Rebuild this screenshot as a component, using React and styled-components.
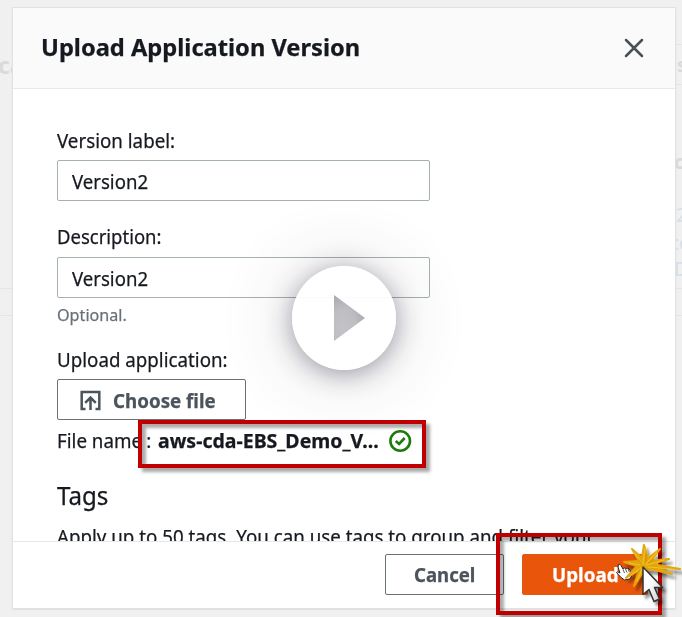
import React from 'react';
import styled, { createGlobalStyle } from 'styled-components';

const GlobalStyle = createGlobalStyle`
  * { box-sizing: border-box; }
  body {
    margin: 0;
    background: #f0f0f0;
    color: #16191f;
    font-family: "Noto Sans", "Open Sans", sans-serif;
    overflow: hidden;
  }
`;

const Screen = styled.main`
  position: relative;
  width: 682px;
  height: 617px;
  padding: 8px 7px 9px 13px;
  overflow: hidden;
  background: #f0f0f0;
`;

/* Dimmed page behind the dialog */
const Backdrop = styled.div`
  position: absolute;
  inset: 0;
`;

const BackdropRule = styled.div`
  position: absolute;
  left: ${(p) => p.$left || 0}px;
  right: 0;
  top: ${(p) => p.$top}px;
  height: 1px;
  background: #e4e5e5;
`;

const BackdropText = styled.span`
  position: absolute;
  left: ${(p) => p.$left}px;
  top: ${(p) => p.$top}px;
  font-size: ${(p) => p.$size || 19}px;
  font-weight: ${(p) => (p.$bold ? 700 : 400)};
  line-height: 24px;
  color: ${(p) => p.$color || '#d9dada'};
`;

const Dialog = styled.section`
  position: relative;
  display: flex;
  flex-direction: column;
  height: 600px;
  background: #fff;
  box-shadow: 0 0 0 1px #e0e3e3, 0 1px 1px #bcc2c3, -1px 1px 1px #d0d3d3, 1px 1px 1px #d0d3d3;
`;

const Header = styled.header`
  display: flex;
  align-items: center;
  justify-content: space-between;
  height: 81px;
  padding: 0 31px 2px 28px;
  background: #fafafa;
  border-bottom: 1px solid #e6eaea;
`;

const Condensed = styled.span`
  display: inline-block;
  white-space: nowrap;
  transform: scaleX(${(p) => p.$scale || 0.937});
  transform-origin: left center;
  -webkit-text-stroke: 0.25px currentColor;
`;

const Title = styled.h1`
  margin: 0;
  font-size: 24px;
  line-height: 32px;
  font-weight: 700;
`;

const CloseButton = styled.button`
  width: 20px;
  height: 20px;
  margin-top: 2px;
  padding: 0;
  border: 0;
  background: none;
  color: #485058;
  svg { display: block; }
`;

const Body = styled.div`
  flex: 1;
  min-height: 0;
  padding: 38px 44px 0;
  overflow: hidden;
`;

const Field = styled.div`
  display: flex;
  flex-direction: column;
  align-items: flex-start;
  margin-bottom: ${(p) => p.$gap}px;
`;

const Label = styled.label`
  height: ${(p) => p.$height || 34}px;
  font-size: 20px;
  line-height: 27px;
`;

const InputBox = styled.div`
  width: 373px;
  height: 41px;
  padding: 0 14px;
  border: 1px solid #a5b0b1;
  border-radius: 2px;
  background: #fff;
  font-size: 20px;
  line-height: 41px;
`;

const Hint = styled.div`
  height: 25px;
  margin-top: 4px;
  font-size: 17px;
  line-height: 25px;
  color: #687078;
`;

const Button = styled.button`
  display: flex;
  align-items: center;
  width: ${(p) => p.$width}px;
  height: 41px;
  padding: ${(p) => p.$drop || 0}px 0 0 ${(p) => p.$inset}px;
  border: 1px solid ${(p) => (p.$primary ? '#e5590f' : '#687078')};
  border-radius: 2px;
  background: ${(p) => (p.$primary ? '#e9560b' : '#fff')};
  color: ${(p) => (p.$primary ? '#fff' : '#4b535c')};
  font: 700 20px/28px "Noto Sans", sans-serif;
  svg { margin-right: 12px; flex: none; }
`;

const FileRow = styled.div`
  display: grid;
  grid-template-columns: 89px 12px 231px auto;
  align-items: center;
  height: 41px;
  font-size: 20px;
  line-height: 28px;
  svg { display: block; }
`;

const FileName = styled.strong`
  font-weight: 700;
`;

const SectionTitle = styled.h2`
  margin: 17px 0 0;
  font-size: 25px;
  line-height: 34px;
  font-weight: 400;
`;

const Paragraph = styled.p`
  margin: 11px 0 0;
  font-size: 20px;
  line-height: 28px;
`;

const Footer = styled.footer`
  display: flex;
  gap: 18px;
  height: 67px;
  padding: 12px 0 0 372px;
  border-top: 1px solid #e6e8e8;
`;

const PlayOverlay = styled.div`
  position: absolute;
  left: 292px;
  top: 266px;
  width: 104px;
  height: 104px;
  border-radius: 50%;
  box-shadow: 0 4px 24px rgba(45, 38, 65, 0.42), 0 2px 70px 8px rgba(50, 50, 60, 0.14);
  svg { display: block; }
`;

const Highlight = styled.div`
  position: absolute;
  left: ${(p) => p.$x}px;
  top: ${(p) => p.$y}px;
  width: ${(p) => p.$w}px;
  height: ${(p) => p.$h}px;
  border: 4px solid #c00000;
  box-shadow: 4px 4px 3px rgba(0, 0, 0, 0.34), inset 4px 4px 3px rgba(0, 0, 0, 0.32);
`;

const Pointer = styled.svg`
  position: absolute;
  left: 612px;
  top: 540px;
`;

const CloseIcon = () => (
  <svg width="20" height="20" viewBox="0 0 20 20" fill="none" stroke="currentColor" strokeWidth="2.5" strokeLinecap="round">
    <path d="M2 2L18 18M18 2L2 18" />
  </svg>
);

const UploadIcon = () => (
  <svg width="21" height="21" viewBox="0 0 21 21" fill="none" stroke="currentColor" strokeWidth="2.5">
    <path d="M5.5 19H1.7V2H19.3V19H15.5M10.5 20V8M5.2 12.8L10.5 7.6L15.8 12.8" />
  </svg>
);

const SuccessIcon = () => (
  <svg width="24" height="24" viewBox="0 0 24 24" fill="none" stroke="#1d7a0c" strokeWidth="2.6">
    <circle cx="11.2" cy="12" r="9.8" />
    <path d="M6.7 12L10.1 15L15.7 9" />
  </svg>
);

const PlayIcon = () => (
  <svg width="104" height="104" viewBox="0 0 104 104">
    <defs>
      <radialGradient id="play" cx="0.3" cy="0.7" r="0.8">
        <stop offset="0" stopColor="#c3c3c7" />
        <stop offset="0.5" stopColor="#bdbdc2" />
        <stop offset="1" stopColor="#a6a6ad" />
      </radialGradient>
    </defs>
    <circle cx="52" cy="52" r="52" fill="#fff" fillOpacity="0.93" />
    <path d="M42 29L73 52L42 75Z" fill="url(#play)" />
  </svg>
);

const ClickPointer = () => (
  <Pointer width="70" height="70" viewBox="0 0 70 70">
    <defs>
      <filter id="soft" x="-30%" y="-30%" width="180%" height="180%">
        <feDropShadow dx="3" dy="4" stdDeviation="1.5" floodColor="#000" floodOpacity="0.45" />
      </filter>
      <linearGradient id="arrow" x1="0" y1="0" x2="1" y2="1">
        <stop offset="0.4" stopColor="#fff" />
        <stop offset="1" stopColor="#c8c8c8" />
      </linearGradient>
    </defs>
    <path
      d="M6.5 24.5Q8 23.5 9 25.5L11 29L12.5 28L14.5 28.5L16 28L18 30L19.5 36L18 39L12.5 40L8.5 37L4.5 32.5Q5 31 8 33L6 27Z"
      fill="#fff"
      stroke="#282828"
      strokeWidth="1"
      strokeLinejoin="round"
    />
    <path d="M11 29.5L12.5 33M13.5 29L15 32.5M16 28.5L17.3 32" stroke="#333" strokeWidth="0.8" />
    <g filter="url(#soft)" fill="none" stroke="#e3a50c" strokeLinecap="round" strokeLinejoin="round">
      <path
        d="M12 22L25 26L14 38L27 30L22 46L31 32L38 29L60 34L42 27L68 29L40 24L57 19L39 21L48 9L36 18L32 5L30 18L20 9L27 21Z"
        fill="#e3a50c"
        strokeWidth="2"
      />
      <path d="M31 25L22 12M31 24L33 8M34 24L45 12M35 25L52 20M28 25L17 23M29 28L19 35M30 29L25 41M36 27L61 29" stroke="#f5c21e" strokeWidth="1.2" />
      <path d="M30 24L26 19M34 22L34 14M36 23L42 19M28 29L24 36" stroke="#c98b06" strokeWidth="0.8" />
    </g>
    <path
      filter="url(#soft)"
      d="M31 27L31 54.5L37 49.5L42 61.5L47.5 59L42.5 47.5L50.5 47.5Z"
      fill="url(#arrow)"
      stroke="#333"
      strokeWidth="1.5"
      strokeLinejoin="round"
    />
  </Pointer>
);

export default function App() {
  return (
    <>
      <GlobalStyle />
      <Screen>
        <Backdrop>
          <BackdropText $left={-2} $top={53} $size={23} $bold>ca</BackdropText>
          <BackdropRule $top={44} $left={670} />
          <BackdropRule $top={84} $left={670} />
          <BackdropRule $top={288} />
          <BackdropRule $top={315} />
          <BackdropText $left={677} $top={53} $bold>s</BackdropText>
          <BackdropText $left={674} $top={150} $bold>c</BackdropText>
          <BackdropText $left={676} $top={203} $color="#d5dfe9">2</BackdropText>
          <BackdropText $left={670} $top={231} $color="#d5dfe9">co</BackdropText>
          <BackdropText $left={674} $top={257} $color="#d5dfe9">D</BackdropText>
        </Backdrop>

        <Dialog>
          <Header>
            <Title><Condensed $scale={0.986}>Upload Application Version</Condensed></Title>
            <CloseButton aria-label="Close"><CloseIcon /></CloseButton>
          </Header>

          <Body>
            <Field $gap={22}>
              <Label $height={33}><Condensed>Version label:</Condensed></Label>
              <InputBox><Condensed $scale={0.93}>Version2</Condensed></InputBox>
            </Field>
            <Field $gap={19}>
              <Label $height={34}><Condensed $scale={0.925}>Description:</Condensed></Label>
              <InputBox><Condensed $scale={0.93}>Version2</Condensed></InputBox>
              <Hint><Condensed $scale={0.95}>Optional.</Condensed></Hint>
            </Field>
            <Field $gap={0}>
              <Label $height={33}><Condensed>Upload application:</Condensed></Label>
              <Button $width={189} $inset={22} $drop={2}>
                <UploadIcon />
                <Condensed>Choose file</Condensed>
              </Button>
            </Field>
            <FileRow>
              <Condensed>File name</Condensed>
              <span>:</span>
              <FileName><Condensed $scale={0.975}>aws-cda-EBS_Demo_V...</Condensed></FileName>
              <SuccessIcon />
            </FileRow>
            <SectionTitle><Condensed $scale={0.965}>Tags</Condensed></SectionTitle>
            <Paragraph>
              <Condensed>Apply up to 50 tags. You can use tags to group and filter your</Condensed>
            </Paragraph>
          </Body>

          <Footer>
            <Button $width={119} $inset={28}><Condensed $scale={0.93}>Cancel</Condensed></Button>
            <Button $width={126} $inset={29} $primary $drop={1}><Condensed $scale={0.94}>Upload</Condensed></Button>
          </Footer>
        </Dialog>

        <PlayOverlay><PlayIcon /></PlayOverlay>
        <Highlight $x={138} $y={420} $w={288} $h={48} />
        <Highlight $x={496} $y={533} $w={166} $h={82} />
        <ClickPointer />
      </Screen>
    </>
  );
}
